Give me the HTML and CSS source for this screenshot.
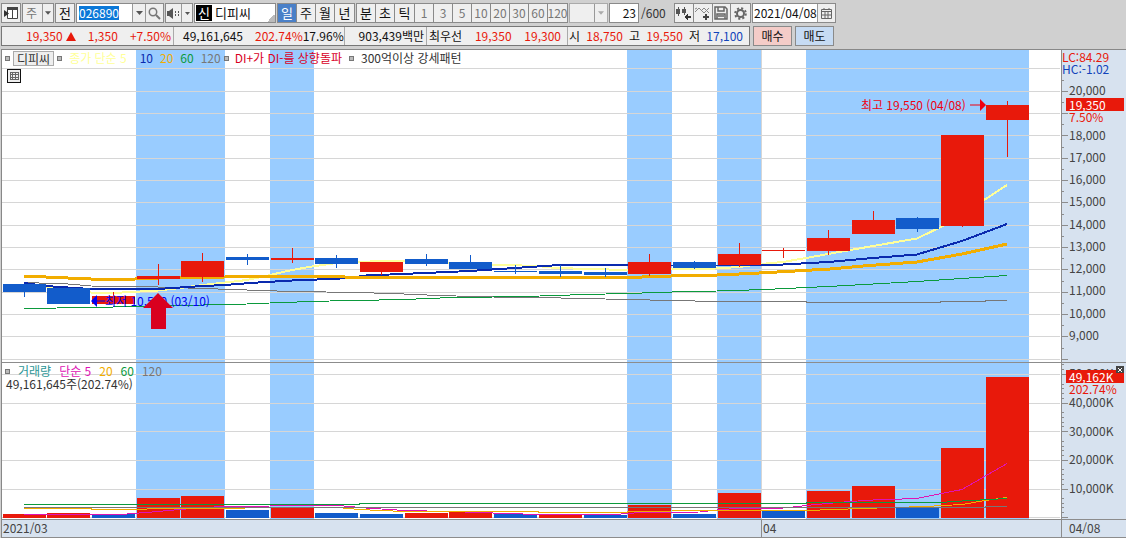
FILE: index.html
```html
<!DOCTYPE html>
<html lang="ko">
<head>
<meta charset="utf-8">
<title>디피씨 026890 일봉 차트</title>
<link rel="stylesheet" href="styles.css">
</head>
<body>
<header class="toolbar">
  <button class="btn icon-btn" aria-label="패널 열기"><svg width="14" height="14" viewBox="0 0 14 14"><path d="M3.5 1.5h10v11h-10z" fill="#fff" stroke="#444"/><path d="M3 1h11v3H3zM8 3h1v10H8z" fill="#444"/><path d="M0 4v7l5-3.500z" fill="#333"/></svg></button>
  <span class="combo type-combo"><select class="combo-select" aria-label="종목 구분"><option>주</option></select><svg class="caret" width="7" height="4" viewBox="0 0 7 4"><path d="M0 0h7L3.500 4z"/></svg></span>
  <button class="btn prev-btn">전</button>
  <span class="code-box">
    <input class="code-input" aria-label="종목코드" value="026890">
    <button class="drop wide" aria-label="종목 목록"><svg width="7" height="4" viewBox="0 0 7 4"><path d="M0 0h7L3.500 4z"/></svg></button>
    <button class="drop search" aria-label="종목 검색"><svg width="13" height="13" viewBox="0 0 13 13" fill="none" stroke="#777"><circle cx="5" cy="5" r="3.700" stroke-width="1.500"/><path d="M8 8l4 4" stroke-width="2"/></svg></button>
  </span>
  <span class="code-box sound">
    <button class="drop speaker" aria-label="소리"><svg width="13" height="11" viewBox="0 0 13 11" fill="#555"><path d="M0 3h2l4-3v11L2 8H0zM8 3h1v2H8zM11 3h1v2h-1zM8 6h1v2H8zM11 6h1v2h-1z"/></svg></button>
    <button class="drop" aria-label="소리 설정"><svg width="5" height="3" viewBox="0 0 5 3"><path d="M0 0h5L2.500 3z"/></svg></button>
  </span>
  <div class="name-box"><b class="badge">신</b><span>디피씨</span></div>
  <div class="seg period">
    <button class="seg-btn on">일</button><button class="seg-btn">주</button><button class="seg-btn">월</button><button class="seg-btn">년</button>
  </div>
  <div class="seg">
    <button class="seg-btn">분</button><button class="seg-btn">초</button><button class="seg-btn">틱</button>
  </div>
  <div class="seg minutes">
    <button class="seg-btn" disabled>1</button><button class="seg-btn" disabled>3</button><button class="seg-btn" disabled>5</button><button class="seg-btn" disabled>10</button><button class="seg-btn" disabled>20</button><button class="seg-btn" disabled>30</button><button class="seg-btn" disabled>60</button><button class="seg-btn" disabled>120</button>
  </div>
  <span class="combo off-combo"><select class="combo-select" aria-label="분 간격" disabled><option></option></select><svg class="caret" width="7" height="4" viewBox="0 0 7 4"><path d="M0 0h7L3.500 4z"/></svg></span>
  <label class="count"><input class="count-input" aria-label="표시 봉 수" value="23">/600</label>
  <div class="seg tools">
    <button class="seg-btn" aria-label="봉 추가"><svg width="15" height="15" viewBox="0 0 15 15" shape-rendering="crispEdges"><path d="M0 3h4v5H0zM2 1h1v9H2zM6 3h4v4H6zM8 1h1v8H8z" fill="#555"/><path d="M8 11l4-4v3h3v2h-3v3z" fill="#333"/></svg></button>
    <button class="seg-btn" aria-label="지표 추가"><svg width="15" height="15" viewBox="0 0 15 15" fill="none"><path d="M0 6l4-4 5 5 5-5M0 3l2-1M6 5l3-3 3 3 2 2" stroke="#888"/><path d="M11 8v6M8 11h6" stroke="#444" stroke-width="2"/></svg></button>
    <button class="seg-btn" aria-label="저장"><svg width="14" height="14" viewBox="0 0 14 14" fill="none" stroke="#666" stroke-width="1.500"><path d="M1 1h10l2 2v10H1zM4 1v4h6V1M3 13V8h8v5M4 10h6"/></svg></button>
    <button class="seg-btn" aria-label="설정"><svg width="13" height="13" viewBox="0 0 13 13" fill="none" stroke="#666"><circle cx="6.500" cy="6.500" r="3.500" stroke-width="2"/><circle cx="6.500" cy="6.500" r="5.300" stroke-width="2" stroke-dasharray="2.100 2.060"/></svg></button>
  </div>
  <span class="code-box date-box">
    <input class="date-input" aria-label="날짜" value="2021/04/08">
    <button class="drop cal" aria-label="달력"><svg width="11" height="11" viewBox="0 0 11 11" fill="none" stroke="#666"><path d="M.5 1.500h10v9H.5zM0 3.500h11M3 0v2M8 0v2M1 7h9M4 4v6M7 4v6"/></svg></button>
  </span>
</header>

<section class="quote">
  <div class="quote-panel">
    <div class="cell change red"><span>19,350<svg class="up" width="10" height="9" viewBox="0 0 10 9"><path d="M5 0l5 9H0z"/></svg></span><span>1,350</span><span>+7.50%</span></div>
    <div class="cell volume"><span>49,161,645</span><span class="red push">202.74%</span><span>17.96%</span></div>
    <div class="cell amount"><span>903,439백만</span></div>
    <div class="cell best"><span>최우선</span><span class="red">19,350</span><span class="red">19,300</span></div>
    <div class="cell ohlc"><span>시</span><span class="red">18,750</span><span>고</span><span class="red">19,550</span><span>저</span><span class="blue">17,100</span></div>
  </div>
  <button class="trade buy">매수</button>
  <button class="trade sell">매도</button>
</section>

<main class="chart">
  <div class="panel price">
    <svg class="plot" viewBox="2 50 1059 312" preserveAspectRatio="none" shape-rendering="crispEdges">
      <path class="band" d="M136 50h89v312h-89zM270 50h44v312h-44zM627 50h45v312h-45zM717 50h44v312h-44zM806 50h223v312H806z"/>
      <path class="grid" d="M2 68.500h1058M2 91.500h1058M2 113.500h1058M2 135.500h1058M2 158.500h1058M2 180.500h1058M2 202.500h1058M2 225.500h1058M2 247.500h1058M2 269.500h1058M2 292.500h1058M2 314.500h1058M2 336.500h1058M2 359.500h1058M761.500 50v312"/>
      <polyline class="ma gray" points="24,282.500 68,284 91,286 158,287 203,288.500 247,290 292,291.500 359,292.500 404,294 438,295.500 493,297 538,297.500 583,298.500 627,299.500 672,300.500 717,301.500 806,301.500 807,302.500 940,302.500 941,301.500 985,301.500 986,300.500 1007,300.500"/>
      <polyline class="ma green" points="24,308.500 91,307.500 158,306 203,305 247,304 281,302.500 330,301 404,299.500 440,298 493,297 540,296 585,294.500 627,293.500 672,292 717,291 765,289.500 828,286.500 873,284 917,281.500 962,278.500 1007,275.500"/>
      <polyline class="ma yellow" points="24,284 46,287 68,290 91,292.500 122,292.500 158,290.500 180,288 203,285 247,280 270,275 292,270 315,266 337,263 359,262 381,261 415,261 449,263 492,264.500 537,266 555,268 590,269 627,270 671,269 716,268.500 739,267 761,264 783,262 806,258 828,254 873,246 917,238.500 945,225 984,200 1007,185"/>
      <polyline class="ma navy" points="24,283 46,286 68,287.500 91,289 158,289 180,287.500 203,286 225,285 250,283 292,280.500 330,279 350,278 366,275.500 425,273 470,271 500,269 530,267 560,265 627,265 671,265.500 761,265.500 783,264.500 828,262 873,258 917,254.500 962,241 1007,224"/>
      <polyline class="ma orange" points="24,276 68,278 91,279 135,279 158,278 225,277 330,276.500 359,277.500 627,277.500 671,276 706,275.500 750,273.500 795,271 830,269 863,266 917,262 962,254 1007,244"/>
      <path class="fall" d="M3 284h43v8H3zM24 284h1v13h-1zM47 288h43v16H47zM226 257h43v3h-43zM247 254h1v11h-1zM315 258h43v6h-43zM336 255h1v13h-1zM405 259h43v5h-43zM426 254h1v12h-1zM449 262h43v7h-43zM470 255h1v8h-1zM494 271h43v1h-43zM515 265h1v9h-1zM539 271h43v3h-43zM560 265h1v12h-1zM584 272h43v3h-43zM605 268h1v9h-1zM673 262h43v6h-43zM694 261h1v8h-1zM896 218h43v11h-43zM917 217h1v15h-1z"/>
      <path class="rise" d="M92 296h43v8H92zM113 292h1v12h-1zM137 276h43v3h-43zM158 264h1v21h-1zM181 261h43v16h-43zM202 253h1v29h-1zM271 258h43v2h-43zM292 248h1v15h-1zM360 262h43v10h-43zM381 272h1v3h-1zM628 262h43v12h-43zM649 254h1v22h-1zM718 254h43v11h-43zM739 243h1v24h-1zM762 250h43v1h-43zM783 248h1v10h-1zM807 238h43v13h-43zM828 230h1v25h-1zM852 220h43v14h-43zM873 211h1v9h-1zM941 135h43v91h-43zM962 226h1v1h-1zM986 105h43v15h-43zM1007 101h1v56h-1z"/>
    </svg>
    <ul class="legend">
      <li class="mark"></li><li class="chip">디피씨</li><li class="mark"></li>
      <li class="c-yellow first-ma">종가 단순 5</li><li class="c-navy">10</li><li class="c-orange">20</li><li class="c-green">60</li><li class="c-gray">120</li>
      <li class="mark m-left"></li><li class="c-crimson">DI+가 DI-를 상향돌파</li><li class="mark"></li><li class="pattern">300억이상 강세패턴</li>
    </ul>
    <svg class="table-icon" width="14" height="14" viewBox="0 0 14 14" shape-rendering="crispEdges"><path d="M.5.5h13v13H.5z" fill="#eee" stroke="#111"/><path d="M3 3.500h8v7H3zM3 5.500h8M3 8h8M5.500 3v8M8.500 3v8" fill="none" stroke="#666"/></svg>
    <div class="note low"><svg width="14" height="12" viewBox="0 0 14 12"><path d="M0 6l6-6v12zM6 5.500h8v1H6z"/></svg><span>최저 10,500 (03/10)</span></div>
    <svg class="signal" width="30" height="37" viewBox="0 0 30 37"><path d="M15 0l15 15h-7v21H8V15H0z"/></svg>
    <div class="note high"><span>최고 19,550 (04/08)</span><svg width="16" height="12" viewBox="0 0 16 12"><path d="M16 6l-6-6v12zM0 5.500h10v1H0z"/></svg></div>
  </div>
  <div class="axis price-axis">
    <svg class="ticks" viewBox="1062 50 6 312" preserveAspectRatio="none" shape-rendering="crispEdges"><path d="M1062 91.500h6M1062 113.500h6M1062 135.500h6M1062 158.500h6M1062 180.500h6M1062 202.500h6M1062 225.500h6M1062 247.500h6M1062 269.500h6M1062 292.500h6M1062 314.500h6M1062 336.500h6M1062 359.500h6M1062 80.500h2M1062 102.500h2M1062 124.500h2M1062 147.500h2M1062 169.500h2M1062 191.500h2M1062 214.500h2M1062 236.500h2M1062 258.500h2M1062 281.500h2M1062 303.500h2M1062 325.500h2M1062 348.500h2"/></svg>
    <div class="ratios"><div class="red">LC:84.29</div><div class="blue">HC:-1.02</div></div>
    <ol class="scale"><li>20,000</li><li></li><li>18,000</li><li>17,000</li><li>16,000</li><li>15,000</li><li>14,000</li><li>13,000</li><li>12,000</li><li>11,000</li><li>10,000</li><li>9,000</li></ol>
    <div class="tag price-tag"><div class="tag-value">19,350</div><div class="tag-rate">7.50%</div></div>
  </div>
  <div class="panel vol">
    <svg class="plot" viewBox="2 363 1059 156" preserveAspectRatio="none" shape-rendering="crispEdges">
      <path class="band" d="M136 363h89v156h-89zM270 363h44v156h-44zM627 363h45v156h-45zM717 363h44v156h-44zM806 363h223v156H806z"/>
      <path class="grid" d="M2 374.500h1058M2 403.500h1058M2 431.500h1058M2 460.500h1058M2 489.500h1058M2 517.500h1058M761.500 363v156"/>
      <path class="fall" d="M92 514h43v4H92zM226 510h43v8h-43zM315 513h43v5h-43zM360 514h43v4h-43zM494 514h43v4h-43zM584 515h43v3h-43zM673 514h43v4h-43zM762 511h43v7h-43zM896 507h43v11h-43z"/>
      <path class="rise" d="M3 514h43v4H3zM47 513h43v5H47zM137 498h43v20h-43zM181 496h43v22h-43zM271 508h43v10h-43zM405 513h43v5h-43zM449 512h43v6h-43zM539 515h43v3h-43zM628 505h43v13h-43zM718 493h43v25h-43zM807 491h43v27h-43zM852 486h43v32h-43zM941 448h43v70h-43zM986 377h43v141h-43z"/>
      <polyline class="ma magenta" points="24,514.500 121,514.500 158,511.500 180,509.500 203,507.500 225,506.500 270,506 315,505.500 344,506 366,508 389,509.500 404,510.500 450,511.500 493,513 538,514.500 583,514.500 615,514.500 640,512.500 700,512 717,510 735,508.500 785,508 806,505.500 850,501.500 873,500 917,498.500 962,489.500 1007,463.500"/>
      <polyline class="ma vol-orange" points="24,508.500 91,508.500 92,509.500 136,509.500 158,508.500 337,507.500 359,509.500 381,510.500 404,511.500 538,511.500 539,512.500 627,512.500 628,511.500 717,510.500 806,510.500 862,508.500 925,506.500 962,504.500 985,500.500 1007,497.500"/>
      <polyline class="ma gray" points="24,507.500 985,507.500 986,506.500 1007,506.500"/>
      <polyline class="ma green" points="24,504.500 359,504.500 360,503.500 806,503.500 807,502.500 940,502.500 970,500.500 990,499.500 1007,498.500"/>
    </svg>
    <ul class="legend vol-legend">
      <li class="mark"></li><li class="c-teal">거래량</li><li class="c-magenta">단순 5</li><li class="c-orange">20</li><li class="c-green">60</li><li class="c-gray">120</li>
    </ul>
    <div class="vol-now">49,161,645주(202.74%)</div>
  </div>
  <div class="axis vol-axis">
    <svg class="ticks" viewBox="1062 363 6 156" preserveAspectRatio="none" shape-rendering="crispEdges"><path d="M1062 374.500h6M1062 403.500h6M1062 431.500h6M1062 460.500h6M1062 489.500h6M1062 517.500h6M1062 364.500h2M1062 369.500h2M1062 384.500h2M1062 388.500h2M1062 393.500h2M1062 398.500h2M1062 412.500h2M1062 417.500h2M1062 422.500h2M1062 426.500h2M1062 441.500h2M1062 446.500h2M1062 450.500h2M1062 455.500h2M1062 469.500h2M1062 474.500h2M1062 479.500h2M1062 484.500h2M1062 498.500h2M1062 503.500h2M1062 507.500h2M1062 512.500h2"/></svg>
    <ol class="scale"><li>50,000K</li><li>40,000K</li><li>30,000K</li><li>20,000K</li><li>10,000K</li></ol>
    <div class="tag vol-tag"><div class="tag-value">49,162K</div><div class="tag-rate">202.74%</div></div>
    <button class="close" aria-label="닫기"><svg width="4" height="4" viewBox="0 0 4 4"><path d="M0 0l4 4M4 0L0 4" stroke="#fff"/></svg></button>
  </div>
  <div class="time"><span>2021/03</span><span class="month">04</span></div>
  <div class="axis time-end">04/08</div>
</main>
</body>
</html>
```
FILE: styles.css
```css
* { box-sizing: border-box; }
body {
  margin: 0;
  height: 100vh;
  display: flex;
  flex-direction: column;
  background: #d0d0d0;
  color: #111;
  font: 12px/18px "Noto Sans CJK KR", sans-serif;
  white-space: nowrap;
}
button, input, select { font: inherit; color: inherit; margin: 0; padding: 0; border-radius: 0; }
ul, ol { list-style: none; margin: 0; padding: 0; }
svg { display: block; flex: none; }
.red { color: #e8190b; }
.blue { color: #1144bb; }

/* toolbar */
.toolbar { display: flex; gap: 1px; padding: 3px 0 3px 1px; height: 26px; flex: none; }
.btn, .combo, .code-box, .name-box, .seg, .count-input { border: 1px solid #8a8a8a; background: #efefef; height: 20px; flex: none; }
.btn { width: 20px; display: flex; align-items: center; justify-content: center; }
.prev-btn { font-size: 13px; }
.combo { position: relative; width: 32px; }
.combo-select { appearance: none; border: 0; background: none; width: 100%; height: 18px; padding-left: 3px; color: #777; }
.combo .caret { position: absolute; right: 0; top: 0; width: 11px; height: 18px; padding: 7px 2px; border-left: 1px solid #999; fill: #555; }
.off-combo { width: 39px; border-color: #aaa; }
.off-combo .caret { fill: #aaa; width: 13px; padding: 7px 3px; }
.code-box { display: flex; background: #fff; }
.code-input { width: 55px; height: 18px; padding: 0 2px; border: 0; color: #fff; background: linear-gradient(#0b78d8, #0b78d8) 2px 2px / 40px 14px no-repeat; }
.drop { width: 11px; height: 18px; border: 0; border-left: 1px solid #999; background: #efefef; display: flex; align-items: center; justify-content: center; fill: #555; }
.wide { width: 13px; }
.search { width: 18px; }
.speaker { width: 15px; border-left: 0; }
.cal { width: 18px; }
.date-input { width: 64px; height: 18px; border: 0; padding: 0 0 0 1px; }
.name-box { width: 82px; display: flex; align-items: center; gap: 3px; padding: 1px; font-size: 13px; background: linear-gradient(135deg, transparent 50%, #bbb 50%) right bottom / 8px 8px no-repeat #fff; }
.badge { background: #000; color: #fff; font-weight: 400; width: 16px; height: 16px; line-height: 16px; text-align: center; }
.seg { display: flex; font-size: 13px; }
.seg-btn { width: 19px; height: 18px; border: 0; border-right: 1px solid #8a8a8a; background: #efefef; display: flex; align-items: center; justify-content: center; }
.seg-btn:last-child { border-right: 0; }
.seg-btn.on { background: #4a80c8; color: #fff; }
.minutes { margin-left: -2px; color: #777; font-size: 12px; }
.count { display: flex; gap: 2px; width: 64px; color: #333; line-height: 20px; }
.count-input { width: 30px; background: #fff; text-align: right; padding: 0 2px; color: #111; }
.tools { width: 77px; }

/* quote strip */
.quote { display: flex; gap: 3px; padding: 0 0 3px 1px; flex: none; }
.quote-panel { display: flex; width: 749px; height: 20px; border: 1px solid #777; background: #efefef; }
.cell { display: flex; justify-content: space-between; border-right: 1px solid #aaa; }
.cell:last-child { border-right: 0; }
.change { width: 172px; padding: 0 2px 0 24px; }
.up { display: inline-block; margin-left: 3px; fill: #e8190b; }
.volume { width: 171px; padding: 0 1px 0 9px; }
.push { margin-left: 12px; }
.amount { width: 82px; padding-right: 2px; justify-content: flex-end; }
.best { width: 141px; padding: 0 6px 0 2px; }
.ohlc { flex: 1; padding: 0 6px 0 1px; }
.trade { width: 39px; height: 20px; border: 1px solid #8a8a8a; }
.buy { background: #f4ccc8; }
.sell { background: #c6dbf3; }

/* chart */
.chart { flex: 1; min-height: 300px; display: grid; grid-template: 312fr 157fr 19px / 1fr 65px; border-top: 1px solid #888; border-left: 1px solid #888; margin-left: 1px; background: #fff; }
.panel, .axis { position: relative; min-width: 0; min-height: 0; }
.plot { position: absolute; width: 100%; height: 100%; }
.vol, .vol-axis, .time, .time-end { border-top: 1px solid #8c8c8c; }
.axis { border-left: 1px solid #8c8c8c; background: #d7e2ef; color: #444; }
.band { fill: #99ccff; }
.grid { stroke: #d6d6d6; }
.rise { fill: #e8190b; }
.fall { fill: #125ccb; }
.ma { fill: none; stroke-width: 1; }
.ma.gray { stroke: #777; }
.ma.green { stroke: #0b9a3c; }
.ma.yellow { stroke: #ffff99; stroke-width: 2; }
.ma.navy { stroke: #0a2aae; stroke-width: 2; }
.ma.orange { stroke: #f2ad00; stroke-width: 3; }
.ma.vol-orange { stroke: #f2ad00; }
.ma.magenta { stroke: #e012b4; }
.c-yellow { color: #ffff99; }
.c-navy { color: #0a2aae; }
.c-orange { color: #f2ad00; }
.c-green { color: #0b9a3c; }
.c-gray { color: #777; }
.c-crimson { color: #d9001f; }
.c-teal { color: #2a9696; }
.c-magenta { color: #e012b4; }
.legend { position: absolute; left: 3px; top: 0; display: flex; align-items: center; gap: 7px; height: 16px; line-height: 16px; }
.vol-legend { gap: 8px; }
.mark { width: 5px; height: 5px; border: 1px solid #777; background: #bbb; }
.chip { border: 1px solid #aaa; background: #eee; line-height: 13px; padding: 0 3px; margin: 0 -4px; color: #333; }
.first-ma { margin-right: 6px; }
.m-left { margin: 0 -1px 0 -4px; }
.pattern { color: #333; }
.table-icon { position: absolute; left: 5px; top: 19px; }
.note { position: absolute; display: flex; align-items: center; line-height: 14px; }
.low { left: 8.4%; top: 78.2%; color: #0000f0; fill: #0000f0; }
.high { right: 7.1%; top: 15.3%; gap: 4px; color: #f00010; fill: #f00010; }
.signal { position: absolute; left: 13.3%; top: 77.9%; fill: #d9001f; }
.ticks { position: absolute; left: 0; top: 0; width: 6px; height: 100%; stroke: #8c8c8c; }
.ratios { position: absolute; left: 0; top: 1px; line-height: 12px; }
.scale { display: grid; height: 100%; padding-left: 7px; }
.price-axis .scale { grid-template-rows: repeat(12, 1fr); align-items: center; padding-top: 29px; padding-bottom: 16px; }
.price-axis li { height: 18px; }
.vol-axis .scale { grid-template-rows: repeat(5, 1fr); padding-top: 1px; padding-bottom: 11px; }
.tag { position: absolute; left: 4px; right: 2px; color: #e8190b; line-height: 12px; }
.price-tag { top: 15.4%; }
.vol-tag { top: 4.5%; }
.tag-value { background: #e8190b; color: #fff; line-height: 13px; }
.tag-value, .tag-rate { padding-left: 3px; }
.close { position: absolute; right: 2px; top: 3px; width: 8px; height: 7px; border: 0; background: #444; display: flex; align-items: center; justify-content: center; }
.time { display: grid; grid-template-columns: 759fr 300fr; background: #d7e2ef; color: #444; line-height: 16px; border-bottom: 1px solid #8c8c8c; }
.time span { padding-left: 1px; }
.time .month { border-left: 1px solid #8c8c8c; }
.time-end { padding-left: 7px; line-height: 16px; border-bottom: 1px solid #8c8c8c; }
.vol-now { position: absolute; left: 4px; top: 14px; line-height: 14px; color: #333; }
```
